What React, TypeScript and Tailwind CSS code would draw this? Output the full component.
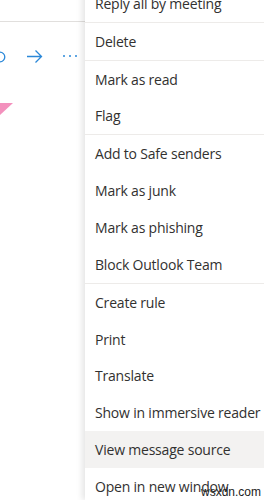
const items: { label: string; sepAfter?: boolean; active?: boolean }[] = [
  { label: "Reply all by meeting", sepAfter: true },
  { label: "Delete", sepAfter: true },
  { label: "Mark as read" },
  { label: "Flag", sepAfter: true },
  { label: "Add to Safe senders" },
  { label: "Mark as junk" },
  { label: "Mark as phishing" },
  { label: "Block Outlook Team", sepAfter: true },
  { label: "Create rule" },
  { label: "Print" },
  { label: "Translate" },
  { label: "Show in immersive reader" },
  { label: "View message source", active: true },
  { label: "Open in new window" },
];

export default function App() {
  return (
    <div
      className="relative flex w-[264px] h-[500px] overflow-hidden bg-white"
      style={{ fontFamily: '"Open Sans", "Noto Sans", sans-serif' }}
    >
      {/* reading pane behind the menu */}
      <div className="w-[85px] shrink-0">
        <div className="h-[22px] border-b border-[#e1dfdd]" />
        <div className="relative h-[50px]">
          <svg className="absolute left-[-6px] top-[29px]" width="12" height="12" viewBox="0 0 12 12">
            <circle cx="6" cy="6" r="4.8" fill="none" stroke="#2b88d8" strokeWidth="1.3" />
          </svg>
          <svg className="absolute left-[26px] top-[27px]" width="17" height="15" viewBox="0 0 17 15">
            <path d="M1 7.5h14.5M9.5 1.5l6 6-6 6" fill="none" stroke="#2b88d8" strokeWidth="1.3" />
          </svg>
          <div className="absolute left-[63px] top-[33px] flex gap-[4px]">
            <span className="w-[2px] h-[2px] rounded-full bg-[#2b88d8]" />
            <span className="w-[2px] h-[2px] rounded-full bg-[#2b88d8]" />
            <span className="w-[2px] h-[2px] rounded-full bg-[#2b88d8]" />
          </div>
        </div>
        <svg className="mt-[31px]" width="14" height="13" viewBox="0 0 14 13">
          <polygon points="0,0 13,0 0,12" fill="#f391bd" />
        </svg>
      </div>

      {/* context menu */}
      <div className="flex-1 -mt-[15px] bg-white shadow-[-3px_0_6px_rgba(0,0,0,0.10)]">
        {items.map((it) => (
          <div key={it.label}>
            <div
              className={
                "h-[36.85px] flex items-center pl-[10px] text-[14px] tracking-[-0.2px] text-[#323130] whitespace-nowrap " +
                (it.active ? "bg-[#f3f2f1]" : "")
              }
            >
              {it.label}
            </div>
            {it.sepAfter && <div className="h-px bg-[#edebe9]" />}
          </div>
        ))}
      </div>

      <div
        className="absolute left-[201px] top-[483px] text-[12px] text-[#222]"
        style={{ fontFamily: '"Liberation Sans", sans-serif' }}
      >
        wsxdn.com
      </div>
    </div>
  );
}
